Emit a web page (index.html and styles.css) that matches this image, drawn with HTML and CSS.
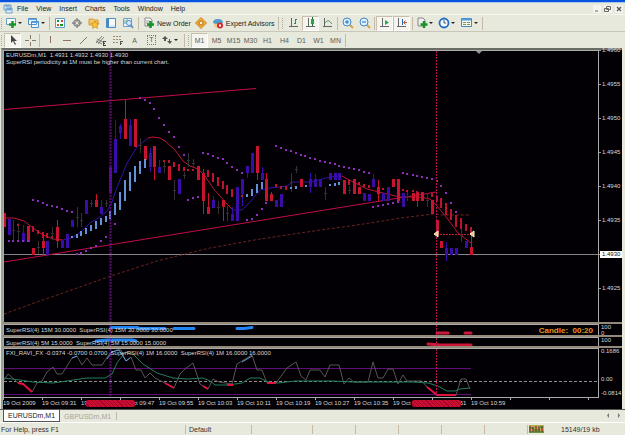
FILE: index.html
```html
<!DOCTYPE html>
<html lang="en">
<head>
<meta charset="utf-8">
<title>EURUSDm,M1</title>
<link rel="stylesheet" href="styles.css">
</head>
<body>
<div class="titlebar"></div>
<header class="menubar">
  <svg class="applogo" width="10" height="10"><path d="M1 1h7v5H1zM3 4h6v5H3z" fill="#e7f1fb" stroke="#6d9fd2"/><path d="M2 2h5M4 5h4" stroke="#4482c4"/></svg>
  <nav class="menus"><a href="#">File</a><a href="#">View</a><a href="#">Insert</a><a href="#">Charts</a><a href="#">Tools</a><a href="#">Window</a><a href="#">Help</a></nav>
  <div class="winbtns">
    <button aria-label="Minimize"><svg width="8" height="8"><path d="M2 6h3" stroke="#666"/></svg></button>
    <button aria-label="Restore"><svg width="8" height="8"><path d="M2.500 1.500h4v3h-4zM.5 3.500h4v3h-4z" fill="none" stroke="#666"/></svg></button>
    <button aria-label="Close"><svg width="8" height="8"><path d="M2 2l4 4M6 2L2 6" stroke="#555" stroke-width="1.300"/></svg></button>
  </div>
</header>
<div class="toolbar main-tools">
  <i class="grip"></i>
  <button class="wide" aria-label="New chart"><svg width="20" height="12"><path d="M1.500 1.500h9v6h-9z" fill="#f4faff" stroke="#6a9dc8"/><path d="M7.500 4v7M4 7.500h7" stroke="#189429" stroke-width="2.500"/><path d="M13 5h4l-2 2z" fill="#222"/></svg></button>
  <button class="wide" aria-label="Profiles"><svg width="20" height="12"><path d="M1.500 1.500h8v6h-8zM4.500 4.500h7v6h-7z" fill="#edf7ff" stroke="#4e91c9"/><path d="M2 2.500h7M5 5.500h6" stroke="#66a6db"/><path d="M14 5h4l-2 2z" fill="#222"/></svg></button>
  <i class="sep"></i>
  <button aria-label="Market watch"><svg width="12" height="12"><path d="M1.500 1.500h9v9h-9z" fill="#f6fbff" stroke="#5c9dce"/><path d="M3 3h2v2H3zM6 7h3v2H6z" fill="#18932a"/><path d="M7 3h2v2H7zM3 7h2v2H3z" fill="#d94c2b"/></svg></button>
  <button aria-label="Data window"><svg width="12" height="12"><circle cx="6" cy="6" r="3" fill="none" stroke="#888" stroke-width="1.500"/><path d="M6 1v4M6 7v4M1 6h4M7 6h4" stroke="#888" stroke-width="1.300"/></svg></button>
  <button aria-label="Navigator"><svg width="12" height="12"><path d="M1 2h4l1 1h4v5H1z" fill="#f3c767" stroke="#d89b35"/><path d="M7 4l1 2 3 .3-2 2 .5 3L7 10l-2.500 1.300.5-3-2-2 3-.3z" fill="#ffc634" stroke="#c98820" stroke-width=".7"/></svg></button>
  <button aria-label="Terminal"><svg width="12" height="12"><path d="M1.500 1.500h9v9h-9z" fill="#f5faff" stroke="#4b8dc9"/><path d="M2 2h2v8H2z" fill="#4687c5"/><path d="M5 9h5" stroke="#b9d4ec"/></svg></button>
  <button aria-label="Strategy tester"><svg width="12" height="12"><path d="M1.500 1.500h8v8h-8z" fill="#eff6fc" stroke="#6ea0cb"/><path d="M3 3v4M5 2v3" stroke="#5aa17c"/><circle cx="7" cy="6" r="2.500" fill="#d7ecff" stroke="#4d91cf"/><path d="M9 8l2 3" stroke="#5b8dbb" stroke-width="1.500"/></svg></button>
  <i class="sep gap"></i>
  <button class="label"><svg width="12" height="12"><path d="M2 1h5l2 2v6H2z" fill="#fff" stroke="#888"/><path d="M3 4h4M3 6h3" stroke="#999"/><path d="M7.500 4v7M4 7.500h7" stroke="#159229" stroke-width="2.500"/></svg>New Order</button>
  <button aria-label="Alerts"><svg width="12" height="12"><path d="M6 .5L11.500 6 6 11.500.5 6z" fill="#f6a92c" stroke="#cc8522"/><circle cx="6" cy="6" r="2" fill="#fff2c5" stroke="#a96e20"/></svg></button>
  <button class="label"><svg width="12" height="12"><circle cx="6" cy="7" r="4" fill="#f2c780"/><path d="M1 6q0-4 5-4t5 4q-5 2-10 0z" fill="#4d9cce"/><circle cx="8" cy="8.500" r="3" fill="#d7282f"/><path d="M7 7.500h2v2H7z" fill="#fff"/></svg>Expert Advisors</button>
  <i class="sep gap"></i><i class="grip"></i>
  <button aria-label="Bar chart"><svg width="12" height="12"><path d="M3.500 1v9M1 9.500h9" stroke="#666"/><path d="M7.500 2v5M7 2.500h2M6 6.500h2" stroke="#2f8763"/></svg></button>
  <button class="on" aria-label="Candlesticks"><svg width="12" height="12"><path d="M3.500 1v9M1 9.500h9" stroke="#666"/><path d="M7.500 0v9" stroke="#176e32"/><path d="M6 2h3v5H6z" fill="#1fa847"/></svg></button>
  <button aria-label="Line chart"><svg width="12" height="12"><path d="M2.500 1v9M1 9.500h9" stroke="#666"/><path d="M3 6q3-5 7 1" fill="none" stroke="#4e9f61"/></svg></button>
  <i class="sep"></i>
  <button aria-label="Zoom in"><svg width="12" height="12"><path d="M8 8l3 3" stroke="#d7a43d" stroke-width="2"/><circle cx="5" cy="5" r="4" fill="#dff1ff" stroke="#3f86ca"/><path d="M5 3v4M3 5h4" stroke="#236eb7"/></svg></button>
  <button aria-label="Zoom out"><svg width="12" height="12"><path d="M8 8l3 3" stroke="#d7a43d" stroke-width="2"/><circle cx="5" cy="5" r="4" fill="#dff1ff" stroke="#3f86ca"/><path d="M3 5h4" stroke="#236eb7"/></svg></button>
  <i class="sep"></i>
  <button class="on" aria-label="Auto scroll"><svg width="12" height="12"><path d="M3.500 1v9M1 9.500h9" stroke="#666"/><path d="M6 3l4 2.500L6 8z" fill="#2ca54c"/></svg></button>
  <button class="on" aria-label="Chart shift"><svg width="12" height="12"><path d="M2.500 1v9M1 9.500h9" stroke="#666"/><path d="M6.500 2v6" stroke="#2865b7"/><path d="M11 5.500H8M9.500 3.500l-2 2 2 2" fill="none" stroke="#b75f35"/></svg></button>
  <i class="sep gap"></i>
  <button class="wide" aria-label="Indicators"><svg width="20" height="12"><path d="M2 1h5l2 2v6H2z" fill="#eee" stroke="#888"/><path d="M8 4v7M4.500 7.500h7" stroke="#18932a" stroke-width="2.500"/><path d="M13 5h4l-2 2z" fill="#222"/></svg></button>
  <button class="wide" aria-label="Periods"><svg width="20" height="12"><circle cx="6" cy="6" r="4.500" fill="#f5faff" stroke="#246fc6" stroke-width="1.800"/><path d="M6 3v3h2" fill="none" stroke="#555"/><path d="M13 5h4l-2 2z" fill="#222"/></svg></button>
  <button class="wide" aria-label="Templates"><svg width="20" height="12"><path d="M1.500 1.500h10v8h-10z" fill="#f5f7ef" stroke="#4d8abc"/><path d="M2 2.500h9" stroke="#4d9bdd" stroke-width="2"/><path d="M3 5.500h3M7 5.500h3M3 7.500h3M7 7.500h3" stroke="#799a58"/><path d="M14 5h4l-2 2z" fill="#222"/></svg></button>
  <i class="sep"></i>
</div>
<div class="toolbar line-tools">
  <i class="grip"></i>
  <button class="on" aria-label="Cursor"><svg width="12" height="12"><path d="M4 1v8l2-2 2 4 1-1-2-3h3z" fill="#444"/></svg></button>
  <button aria-label="Crosshair"><svg width="12" height="12"><path d="M6.500 1v4M6.500 8v4M1 6.500h4M8 6.500h4" stroke="#86786a"/></svg></button>
  <i class="sep"></i>
  <button aria-label="Vertical line"><svg width="12" height="12"><path d="M6.500 2v7" stroke="#8b7461"/></svg></button>
  <button aria-label="Horizontal line"><svg width="12" height="12"><path d="M2 6.500h8" stroke="#8b7461"/></svg></button>
  <button aria-label="Trendline"><svg width="12" height="12"><path d="M2 10l7-7" stroke="#8b7461"/></svg></button>
  <button aria-label="Channel"><svg width="12" height="12"><path d="M1 9l6-7M3 10l6-7M2 5l6 3M1 7l6 3" stroke="#666" stroke-width=".8"/><path d="M8.500 7v4M8 7.500h3M8 9.500h2M8 11.500h3" stroke="#444"/></svg></button>
  <button aria-label="Fibonacci"><svg width="12" height="12"><path d="M1 2.500h9M1 5.500h9M1 8.500h6" stroke="#a18a6b" stroke-dasharray="2 1"/><path d="M8.500 7v4M8 7.500h3M8 9.500h2" stroke="#555"/></svg></button>
  <button>A</button>
  <button class="boxed"><span>T</span></button>
  <button class="wide" aria-label="Arrows"><svg width="20" height="12"><path d="M4 2l3 3H5v2H3V5H1zM9 10L6 7h2V5h1v2h2z" fill="#555"/><path d="M13 5h4l-2 2z" fill="#222"/></svg></button>
  <i class="sep gap"></i><i class="grip"></i>
  <button class="on">M1</button><button>M5</button><button>M15</button><button>M30</button><button>H1</button><button>H4</button><button>D1</button><button>W1</button><button>MN</button>
  <i class="sep"></i>
</div>
<main class="chart">
  <section class="pane price">
    <div class="plot">
      <svg class="draw"><g id="price" transform="translate(-4 -51)">
        <path class="current" d="M4 254.500h594"/>
        <path class="trend" d="M4 109.500L256 88.500M4 262L436 192"/>
        <path class="slow" d="M4 314L34 303 63 293 111 276 157 261 210 248 260 239 300 233 328 229 350 226 377 222 400 218 417 216 433 214 443 215 469 215"/>
        <path class="down" d="M4 218L14 218 24 221 33 228 43 235 53 239 63 240M148 138L153 137 160 138 165 141 175 150 183 161 190 166 198 169 205 176 213 188 225 202 233 210M342 176L353 182 367 189 387 194 400 197 420 197 430 199 437 206 447 218 458 233 471 243"/>
        <path class="up" d="M63 240L72 238 82 231 90 223 100 217 107 211 112 202 116 190 127 163 137 147 148 138M233 210L242 210 250 202 260 190 270 188 287 186 293 182 310 182 330 177 342 176"/>
        <path class="stop" d="M437 234.500h35"/>
      </g><path class="period" d="M106.500 0v272"/><path class="period red" d="M432.500 0v272"/>
      <path class="mark" d="M434 180l-4 3 4 3zM466 183l4-3v6z"/><path class="shift" d="M472 0h6l-3 3z"/></svg>
      <p class="caption">EURUSDm,M1&nbsp; 1.4931 1.4932 1.4930 1.4930<br>SuperRSI periodicity at 1M must be higher than current chart.</p>
    </div>
    <div class="scale prices"><span>1.4960</span><span>1.4955</span><span>1.4950</span><span>1.4945</span><span>1.4940</span><span>1.4935</span><span class="bid"><b>1.4930</b></span><span>1.4925</span></div>
  </section>
  <section class="pane rsi15">
    <div class="plot"><svg class="draw"><path class="hot" d="M107 2.500h27M134 3.500h27M170 3.500h20M233 3.500h7l8-1"/><path class="cold" d="M433 8h11M461 8h6"/><path class="period" d="M106.500 0v12"/><path class="period red" d="M432.500 0v12"/></svg><p class="caption">SuperRSI(4) 15M 30.0000&nbsp; SuperRSI(4) 15M 30.0000 30.0000</p><p class="candle">Candle:&nbsp; 00:20</p></div>
    <div class="scale pair"><span>100</span><span>0</span></div>
  </section>
  <section class="pane rsi5">
    <div class="plot"><svg class="draw"><path class="hot" d="M92 3l12-1h24l4 1"/><path class="cold" d="M424 6l12 1h31"/><path class="period" d="M106.500 0v10"/><path class="period red" d="M432.500 0v10"/></svg><p class="caption">SuperRSI(4) 5M 15.0000&nbsp; SuperRSI(4) 5M 15.0000 15.0000</p></div>
    <div class="scale pair"><span>100</span></div>
  </section>
  <section class="pane ravi">
    <div class="plot"><svg class="draw">
      <path class="level" d="M0 19.500h467M0 45.500h467"/><path class="zero" d="M0 32.500h1600"/>
      <g transform="translate(-4 -348)">
        <path class="gray" d="M4 379L8 373 14 378 18 382 23 383 32 391 37 382 42 380 47 371 53 366 57 373 62 373 72 357 77 355 82 364 87 357 92 364 102 364 110 352 117 349 121 349 126 360 131 356 136 369 141 369 145 377 150 372 155 377 165 382 174 387 180 373 185 368 193 362 200 383 208 388 213 378 219 381 232 383 237 363 252 354 257 369 262 369 267 382 276 382 287 367 296 361 301 375 306 379 310 369 320 369 325 376 330 364 339 364 344 383 349 377 354 381 368 381 373 361 378 377 383 377 388 368 393 368 398 383 403 374 407 380 422 380 427 386 437 394 456 394 461 378 466 378 470 388"/>
        <path class="green" d="M4 377L20 379 33 381 53 382 87 377 105 377 112 373 117 362 125 351 133 353 143 363 157 372 173 377 187 378 203 377 210 380 215 384 228 384 242 382 250 377 260 377 268 381 278 382 295 380 332 380 352 381 378 381 412 381 428 382 438 385 447 390 455 390 460 388 470 387"/>
        <path class="redseg" d="M18 382l5 1 9 8M165 382l9 5M203 385l5 3M227 384h6M267 382h9M427 386l10 8h19"/>
        <path class="blueseg" d="M72 357l5-2M107 358l5-7 7-2 7 11 4-3M242 361l10-6"/>
      </g><path class="period" d="M106.500 0v48"/><path class="period red" d="M432.500 0v48"/></svg>
      <p class="caption">FXI_RAVI_FX -0.0374 -0.0700 0.0700&nbsp; SuperRSI(4) 1M 16.0000&nbsp; SuperRSI(4) 1M 16.0000 16.0000</p></div>
    <div class="scale spread"><span>0.1686</span><span>0.00</span><span>-0.0814</span></div>
  </section>
  <div class="times"><span>19 Oct 2009</span><span>19 Oct 09:31</span><span>19 Oct 09:39</span><span>19 Oct 09:47</span><span>19 Oct 09:55</span><span>19 Oct 10:03</span><span>19 Oct 10:11</span><span>19 Oct 10:19</span><span>19 Oct 10:27</span><span>19 Oct 10:35</span><span>19 Oct 10:43</span><span>19 Oct 10:51</span><span>19 Oct 10:59</span><i class="tag first"></i><i class="tag second"></i></div>
</main>
<div class="tabs"><button class="tab active">EURUSDm,M1</button><button class="tab">GBPUSDm,M1</button><i class="sep"></i><span class="scroll"><button aria-label="Previous"><svg width="10" height="8"><path d="M5 1v5L3 3.500z" fill="#777"/></svg></button><button aria-label="Next"><svg width="10" height="8"><path d="M4 1v5l2-2.500z" fill="#777"/></svg></button></span></div>
<footer class="status"><span class="help">For Help, press F1</span><span class="profile">Default</span><span></span><span class="narrow"></span><span class="narrow"></span><span class="narrow"></span><span class="narrow"></span><span class="narrow"></span><span class="net"><svg width="15" height="8"><path d="M0 0h15v8H0z" fill="#b5ad54"/><path d="M1 1v6M4 2v5M7 1v6M10 2v5M13 1v6" stroke="#ab3528" stroke-width="1.500"/><path d="M0 3h5M5 5h6M9 2h5M0 7h15" stroke="#247a32"/></svg>15149/19 kb</span></footer>
<div class="bottomline"></div>
<script src="chart.js"></script>
</body>
</html>
```
FILE: styles.css
```css
* { box-sizing: border-box; }
body { margin: 0; min-height: 100vh; display: flex; flex-direction: column; background: #e6e9dc; color: #222; font: 7px/9px "Liberation Sans", sans-serif; }
button { font: inherit; color: inherit; border: 0; padding: 0; margin: 0; background: none; display: flex; align-items: center; justify-content: center; white-space: nowrap; }
p { margin: 0; }
a { color: inherit; text-decoration: none; }
svg { display: block; flex: none; }
.titlebar { height: 3px; background: #0753df; border-bottom: 1px solid #a9c8ec; }
.menubar { height: 12px; display: flex; align-items: center; padding: 0 2px 0 3px; border-bottom: 1px solid #f7f7f0; }
.menus { display: flex; gap: 8px; margin-left: 4px; }
.winbtns { margin-left: auto; display: flex; gap: 3px; }
.winbtns button { background: #f4f4ef; }
.toolbar { height: 17px; display: flex; align-items: center; border-bottom: 1px solid #c8c6b9; }
.toolbar button { width: 17px; height: 15px; }
.toolbar .wide { width: 22px; }
.toolbar .on { background: #f5f4ee; border: 1px solid #c9bfae; border-right-color: #fff; border-bottom-color: #fff; }
.toolbar .label { width: auto; gap: 2px; padding: 0 2px; }
.sep { width: 1px; height: 13px; margin: 0 1px; background: #c5b9aa; }
.sep.gap { margin: 0 2px; }
.grip { width: 2px; height: 11px; margin: 0 1px; border-left: 1px dotted #aaa698; }
.line-tools { color: #5f5b55; height: 16px; border-bottom: 0; }
.boxed span { border: 1px dotted #777; padding: 0 1px; line-height: 8px; }
.chart { flex: 1; display: flex; flex-direction: column; background: #020004; color: #d7d7d7; margin: 0 3px 0 1px; border: 2px solid #9aa09b; border-width: 2px 0 0 2px; border-top-color: #6a6c66; font-size: 6px; line-height: 7px; }
.pane { display: flex; border-bottom: 2px solid #948a79; }
.plot { position: relative; flex: 1; border: 1px solid #aaa; border-bottom: 0; overflow: hidden; }
.scale { width: 23px; padding-left: 2px; white-space: nowrap; }
.price { flex: 1; min-height: 274px; }
.rsi15 { height: 13px; }
.rsi5 { height: 11px; }
.ravi { height: 50px; border-bottom: 0; }
.ravi .plot { border-bottom: 1px solid #aaa; }
.draw { position: absolute; inset: 0; width: 100%; height: 100%; fill: none; }
.caption { position: relative; padding: 1px 2px; white-space: nowrap; }
.rsi15 .caption, .rsi5 .caption { padding-top: 2px; }
.candle { position: absolute; right: 5px; top: 1px; color: #e69422; font: bold 8px/9px "Liberation Sans", sans-serif; }
.prices { display: grid; grid-auto-rows: 34px; align-content: start; height: 272px; margin-top: -3px; padding-left: 0; }
.prices span { padding-left: 3px; background: linear-gradient(#999, #999) 0 3px / 2px 1px no-repeat; }
.prices .bid { padding-left: 1px; }
.bid b { display: block; width: 22px; background: #fff; color: #111; font-weight: normal; padding-left: 2px; }
.pair { display: flex; flex-direction: column; line-height: 6px; }
.spread { display: flex; flex-direction: column; justify-content: space-between; padding-bottom: 1px; }
.spread span:nth-child(2) { margin-top: 14px; }
.times { position: relative; display: flex; height: 11px; padding-top: 2px; background: linear-gradient(90deg, #aaa 1px, transparent 1px) 0 0 / 39px 2px repeat-x; }
.times span { width: 39px; flex: none; white-space: nowrap; }
.tag { position: absolute; top: 2px; width: 49px; height: 7px; border-radius: 2px; background: #c8102e repeating-linear-gradient(45deg, transparent 0 2px, #a60035 2px 3px); }
.first { left: 83px; }
.second { left: 409px; }
.current { stroke: #85858a; }
.trend { stroke: #c20b48; }
.slow { stroke: #6a241e; stroke-dasharray: 3 2; }
.down { stroke: #bc1434; }
.up { stroke: #2f15a3; }
.stop { stroke: #c21938; stroke-dasharray: 2 1; }
.period { stroke: #7c1398; stroke-width: 2; stroke-dasharray: 2 1; opacity: .7; }
.period.red { stroke: #b81051; stroke-width: 1; opacity: 1; }
.mark { fill: #f2c27c; stroke: #fff0cf; }
.shift { fill: #8c9590; }
.bull { fill: #3a0ca8; }
.bear { fill: #c8142f; }
.doji { fill: #333331; }
.cool { fill: #6292d8; }
.warm { fill: #ba1431; }
.dot { fill: #8c2fbb; }
.hot { stroke: #2285f3; stroke-width: 3; stroke-linecap: round; }
.cold { stroke: #cd1839; stroke-width: 3; stroke-linecap: round; }
.level { stroke: #600e78; }
.zero { stroke: #8e8e8e; stroke-dasharray: 3 2; }
.gray { stroke: #595551; }
.green { stroke: #237d5b; }
.redseg { stroke: #e0123f; stroke-width: 2; }
.blueseg { stroke: #559dda; }
.tabs { height: 14px; display: flex; align-items: center; border-top: 1px solid #555; border-bottom: 1px solid #fff; }
.tab { height: 12px; padding: 0 4px; color: #aaa598; }
.tab.active { margin-left: 3px; background: #fff; color: #222; border: 1px solid #555; border-top: 0; }
.tabs .sep { height: 8px; }
.scroll { margin-left: auto; display: flex; padding-right: 1px; }
.status { height: 12px; display: flex; align-items: center; color: #333; }
.status span { height: 9px; flex: 0 0 61px; border-left: 1px solid #cbbba6; padding-left: 3px; }
.status .help { flex-basis: 185px; border: 0; padding-left: 1px; }
.status .profile { flex-basis: 66px; }
.status .narrow { flex-basis: 43px; }
.status .net { flex: 1; display: flex; align-items: center; gap: 17px; padding-left: 1px; }
.bottomline { height: 2px; background: #288df0; }
```
FILE: chart.js
```js
const layer = document.getElementById('price');
const NS = 'http://www.w3.org/2000/svg';
function rect(x, top, bottom, width, kind) {
  const r = document.createElementNS(NS, 'rect');
  r.setAttribute('x', x);
  r.setAttribute('y', top);
  r.setAttribute('width', width);
  r.setAttribute('height', bottom - top);
  r.setAttribute('class', kind);
  layer.append(r);
}
// Each bar: x, body top, body bottom, wick top, wick bottom
const bull = [[9,219,235],[23,233,242,225,242],[47,241,255],[62,240,248],[67,234,248],[72,220,227],[86,200,214],[101,207,214,200,214],[110,167,193],[115,139,173,120,173],[120,126,133,124,139],[130,125,146,119,146],[150,153,167,148,172],[159,167,173,160,173],[179,179,194],[213,200,208,196,208],[232,214,221,207,221],[237,187,221],[242,179,194,179,206],[247,166,173,166,178],[252,153,173],[262,173,180,167,180],[276,200,207],[281,194,207],[310,179,187,173,193],[315,179,187,174,187],[320,180,187],[330,173,180],[335,173,180],[339,173,180],[364,193,201],[369,194,201],[373,179,187,174,187],[383,193,201],[388,187,201],[403,193,207],[446,248,255,242,261],[451,248,255],[456,248,255],[466,241,248]];
const bear = [[4,213,227],[28,226,242],[33,248,255],[43,241,248,233,255],[57,227,241,220,248],[96,200,207,194,207],[125,119,139,100,139],[135,119,147],[145,146,160],[154,146,167,146,180],[169,166,180],[198,166,180],[203,173,201,169,214],[208,207,214,193,214],[223,200,207,200,221],[257,146,173,146,180],[266,179,201,173,201],[271,194,201,192,201],[301,179,187],[344,180,194],[354,179,194],[359,187,194],[378,187,194,180,201],[393,179,187],[398,179,201],[413,193,201],[417,192,201,192,207],[422,192,201],[432,200,214],[437,220,235],[441,241,248],[471,247,255,234,255]];
const doji = [[13,220,240],[18,223,240],[38,241,254],[52,227,240],[77,207,227],[81,213,227],[91,200,207],[106,200,207],[140,138,153],[164,160,173],[174,180,200],[184,172,179],[188,153,167],[193,159,167],[218,201,214],[227,206,221],[291,173,192],[296,166,173],[325,187,200],[349,186,194],[407,191,201],[427,193,207],[461,228,242]];
for (const [bars, kind] of [[bull, 'bull'], [bear, 'bear']])
  for (const [x, top, bottom, high = top, low = bottom] of bars) {
    rect(x, high, low, 1, kind);
    rect(x - 1, top, bottom, 3, kind);
  }
for (const [x, high, low] of doji) {
  rect(x, high, low, 1, 'doji');
  rect(x - 1, (high + low) >> 1, ((high + low) >> 1) + 1, 3, 'doji');
}
const cool = [[72,236,238],[77,234,238],[81,231,236],[86,228,234],[91,225,231],[96,221,229],[101,218,225],[106,216,222],[110,211,219],[115,203,215],[120,192,210],[125,180,201],[130,172,191],[135,166,182],[140,161,174],[145,159,168],[247,194,197],[252,189,196],[257,184,193],[262,182,189],[291,187,189],[296,186,189],[306,185,187],[330,184,186],[335,183,186],[339,182,185]];
const warm = [[18,224,226],[33,226,232],[38,230,234],[43,232,238],[47,233,238],[52,236,238],[164,160,162],[169,160,163],[174,162,167],[179,164,171],[184,167,171],[188,169,171],[193,169,171],[208,170,177],[213,173,182],[218,177,186],[223,181,189],[227,185,194],[232,189,197],[242,195,197],[276,184,187],[281,186,189],[286,186,190],[349,180,185],[359,182,185],[364,184,187],[369,185,188],[383,188,190],[403,189,191],[407,190,192],[413,190,192],[417,191,193],[422,192,194],[432,193,197],[437,196,201],[441,198,208],[446,203,215],[451,209,220],[456,215,227],[461,218,229],[466,224,231],[471,227,234]];
for (const [x, top, bottom] of cool) rect(x - 1, top, bottom, 2, 'cool');
for (const [x, top, bottom] of warm) rect(x - 1, top, bottom, 2, 'warm');
const dots = [[9,241],[13,241],[18,241],[23,241],[28,241],[33,200],[38,201],[43,203],[47,205],[52,206],[57,207],[62,209],[67,211],[72,212],[77,254],[81,253],[86,251],[91,248],[96,246],[101,241],[106,237],[115,224],[140,98],[145,100],[150,103],[154,109],[159,118],[164,125],[169,132],[174,137],[179,147],[184,155],[188,200],[193,198],[198,197],[203,153],[208,154],[213,156],[218,158],[223,159],[227,163],[232,167],[237,170],[242,173],[247,220],[252,219],[257,215],[262,209],[266,203],[276,146],[281,148],[286,150],[291,151],[296,153],[301,155],[305,156],[310,158],[315,159],[320,161],[325,162],[330,163],[335,164],[339,166],[344,167],[349,168],[354,169],[359,170],[364,172],[369,173],[373,207],[378,206],[383,205],[388,204],[393,203],[398,202],[403,173],[407,174],[413,175],[417,176],[422,177],[427,178],[432,179],[437,181],[441,186],[446,193],[451,203],[456,212]];
for (const [x, y] of dots) rect(x - 1, y - 1, y + 1, 2, 'dot');
```
